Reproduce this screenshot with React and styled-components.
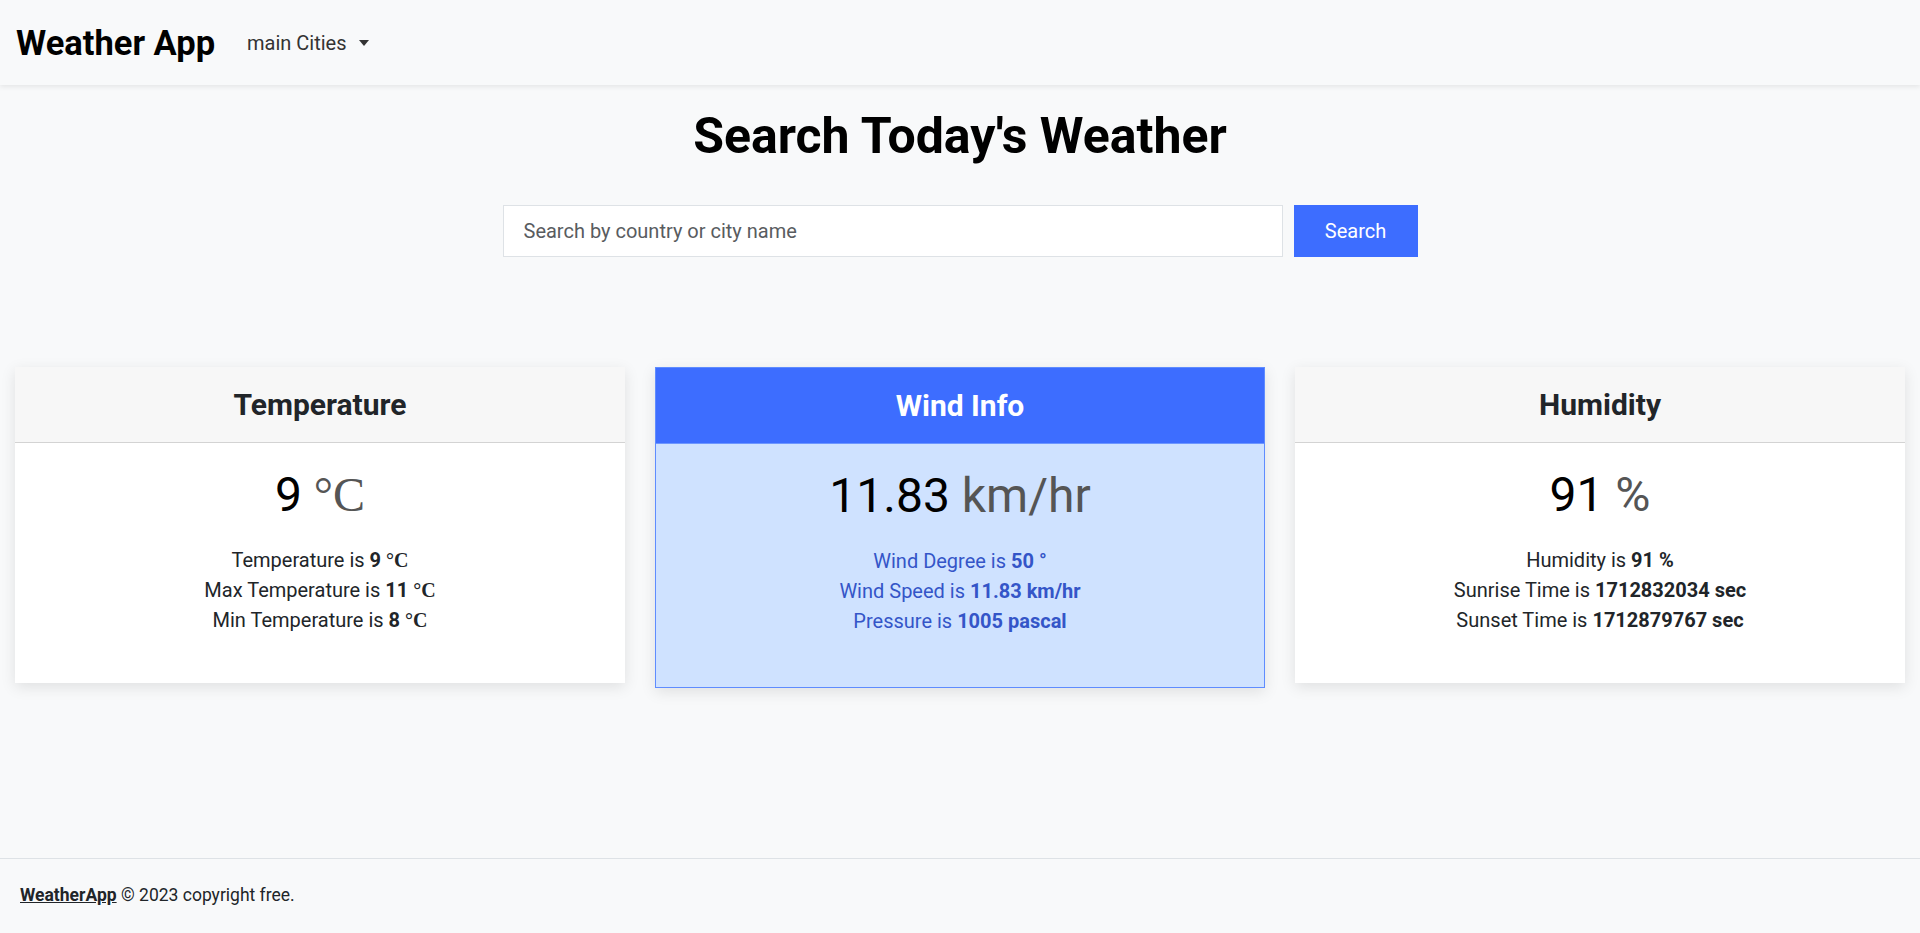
import styled, { createGlobalStyle } from 'styled-components'

const GlobalStyle = createGlobalStyle`
  body {
    margin: 0;
    background-color: #f8f9fa;
    font-family: Roboto, 'Liberation Sans', sans-serif;
    color: #212529;
  }
`

const Page = styled.div`
  display: flex;
  flex-direction: column;
  min-height: 100vh;
`

const Navbar = styled.nav`
  display: flex;
  align-items: center;
  height: 85px;
  padding: 0 16px;
  background-color: #f8f9fa;
  box-shadow: 0 2px 5px rgba(0, 0, 0, 0.08);
`

const Brand = styled.a`
  font-size: 34.5px;
  font-weight: 700;
  color: #000;
  text-decoration: none;
`

const Dropdown = styled.button`
  display: flex;
  align-items: center;
  gap: 12px;
  margin-left: 32px;
  padding: 0;
  border: none;
  background: none;
  font-family: Roboto, sans-serif;
  font-size: 20px;
  color: #333;

  &::after {
    content: '';
    border-top: 6px solid #333;
    border-left: 5.5px solid transparent;
    border-right: 5.5px solid transparent;
  }
`

const Main = styled.main`
  flex: 1;
`

const Heading = styled.h1`
  margin: 21px 0 0;
  font-size: 50px;
  font-weight: 700;
  line-height: 1.2;
  text-align: center;
  color: #000;
`

const SearchForm = styled.form`
  display: flex;
  justify-content: center;
  gap: 11px;
  margin-top: 39px;
`

const SearchInput = styled.input`
  box-sizing: border-box;
  width: 780px;
  height: 52px;
  padding: 0 20px;
  border: 1px solid #dee2e6;
  background-color: #fff;
  font-family: Roboto, sans-serif;
  font-size: 20px;
  color: #212529;

  &::placeholder {
    color: #595c5f;
  }
`

const SearchButton = styled.button`
  width: 124px;
  height: 52px;
  border: none;
  background-color: #3d6dff;
  color: #fff;
  font-family: Roboto, sans-serif;
  font-size: 20px;
`

const CardRow = styled.section`
  display: grid;
  grid-template-columns: repeat(3, 1fr);
  align-items: start;
  column-gap: 30px;
  margin-top: 110px;
  padding: 0 15px;
`

const Card = styled.div`
  background-color: ${({ primary }) => (primary ? '#cfe2ff' : '#fff')};
  border: ${({ primary }) => (primary ? '1px solid #5f8cff' : 'none')};
  box-shadow: 0 4px 14px rgba(0, 0, 0, 0.1);
`

const CardHeader = styled.div`
  display: flex;
  align-items: center;
  justify-content: center;
  height: 75px;
  background-color: ${({ primary }) => (primary ? '#3d6dff' : '#f7f7f7')};
  border-bottom: 1px solid ${({ primary }) => (primary ? '#6d96ff' : '#d3d3d3')};
  color: ${({ primary }) => (primary ? '#fff' : '#212529')};
  font-size: 30px;
  font-weight: 700;
`

const CardBody = styled.div`
  padding: 23px 20px ${({ primary }) => (primary ? '51px' : '48px')};
  text-align: center;
  color: ${({ primary }) => (primary ? '#3455c8' : '#212529')};
`

const Value = styled.div`
  margin-bottom: 21px;
  font-size: 48px;
  line-height: 1.2;
  color: #000;
`

const Unit = styled.span`
  color: #555;
  font-family: ${({ serif }) => (serif ? "'Liberation Serif', serif" : 'inherit')};
`

const Detail = styled.div`
  font-size: 20px;
  line-height: 30px;

  b {
    font-weight: 700;
  }
`

const Deg = styled.span`
  font-family: 'Liberation Serif', serif;
  font-weight: 700;
`

const Footer = styled.footer`
  padding: 23px 20px 24px;
  border-top: 1px solid #dee2e6;
  font-size: 17.5px;
  line-height: 27px;

  a {
    color: #212529;
    font-weight: 700;
  }
`

const cards = [
  {
    title: 'Temperature',
    value: '9',
    unit: '°C',
    serif: true,
    rows: [
      ['Temperature is ', '9'],
      ['Max Temperature is ', '11'],
      ['Min Temperature is ', '8'],
    ],
  },
  {
    title: 'Wind Info',
    value: '11.83',
    unit: 'km/hr',
    primary: true,
    rows: [
      ['Wind Degree is ', '50 °'],
      ['Wind Speed is ', '11.83 km/hr'],
      ['Pressure is ', '1005 pascal'],
    ],
  },
  {
    title: 'Humidity',
    value: '91',
    unit: '%',
    rows: [
      ['Humidity is ', '91 %'],
      ['Sunrise Time is ', '1712832034 sec'],
      ['Sunset Time is ', '1712879767 sec'],
    ],
  },
]

function InfoCard({ title, value, unit, serif, primary, rows }) {
  return (
    <Card primary={primary}>
      <CardHeader primary={primary}>{title}</CardHeader>
      <CardBody primary={primary}>
        <Value>
          {value} <Unit serif={serif}>{unit}</Unit>
        </Value>
        {rows.map(([label, val]) => (
          <Detail key={label}>
            {label}
            <b>{val}</b>
            {serif && (
              <>
                {' '}
                <Deg>°C</Deg>
              </>
            )}
          </Detail>
        ))}
      </CardBody>
    </Card>
  )
}

export default function App() {
  return (
    <Page>
      <GlobalStyle />
      <Navbar>
        <Brand href="#">Weather App</Brand>
        <Dropdown type="button">main Cities</Dropdown>
      </Navbar>
      <Main>
        <Heading>Search Today's Weather</Heading>
        <SearchForm onSubmit={(e) => e.preventDefault()}>
          <SearchInput placeholder="Search by country or city name" />
          <SearchButton type="submit">Search</SearchButton>
        </SearchForm>
        <CardRow>
          {cards.map((c) => (
            <InfoCard key={c.title} {...c} />
          ))}
        </CardRow>
      </Main>
      <Footer>
        <a href="#">WeatherApp</a> © 2023 copyright free.
      </Footer>
    </Page>
  )
}
